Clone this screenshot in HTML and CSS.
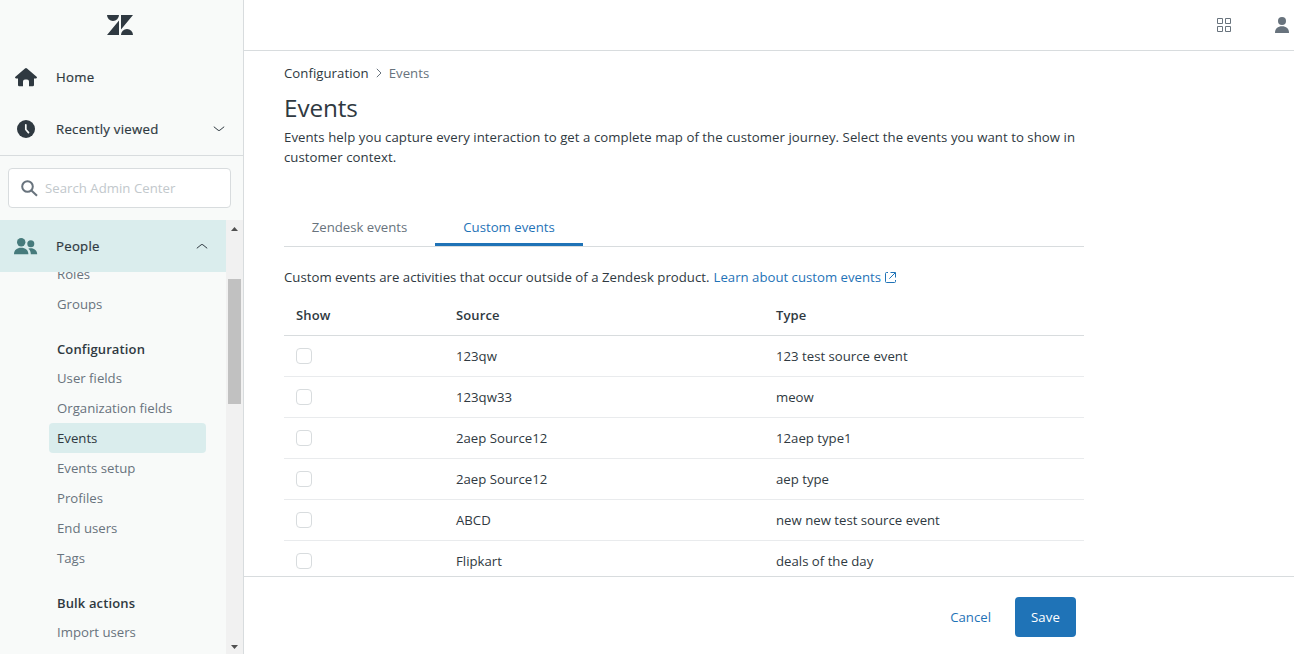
FILE: index.html
```html
<!DOCTYPE html>
<html lang="en">
<head>
<meta charset="utf-8">
<title>Events - Admin Center</title>
<link rel="stylesheet" href="styles.css">
</head>
<body>
<div class="app">
  <aside class="sidebar">
    <div class="logo">
      <svg width="26" height="20" viewBox="0 0 26 20"><path d="M0 0h12a6 6 0 0 1-12 0zM12 5.6V20H0zM14 0h12L14 14.4zM14 20a6 6 0 0 1 12 0z"/></svg>
    </div>
    <a class="nav-row">
      <svg class="icon-home" width="22" height="19" viewBox="0 0 22 19"><path d="M10 .5a1.500 1.500 0 0 1 2 0l9.600 8.300c.9.800.1 1.700-.7 1.700H19v6.500a1.300 1.300 0 0 1-1.300 1.300H14V13.500a2 2 0 0 0-2-2h-2a2 2 0 0 0-2 2v4.800H4.300A1.300 1.300 0 0 1 3 17v-6.500H1.100c-.8 0-1.600-.9-.7-1.700z"/></svg>
      <span>Home</span>
    </a>
    <a class="nav-row">
      <svg class="icon-clock" width="18" height="18" viewBox="0 0 18 18"><circle cx="9" cy="9" r="9"/><path class="hand" d="M8.800 4.800v4.700l2.700 3.100"/></svg>
      <span>Recently viewed</span>
      <svg class="chevron" width="12" height="6" viewBox="0 0 12 6"><path d="M.8.7l4.300 3.500q.9.700 1.800 0L11.200.7"/></svg>
    </a>
    <div class="search-wrap">
      <div class="search">
        <svg width="17" height="17" viewBox="0 0 17 17"><circle cx="6.500" cy="6.500" r="5.300"/><path d="M10.400 10.400l5.600 5.300"/></svg>
        <span>Search Admin Center</span>
      </div>
    </div>
    <div class="nav-scroll">
      <nav class="nav-body">
        <a class="nav-row people">
          <svg class="icon-people" width="24" height="17" viewBox="0 0 24 17"><circle cx="7.200" cy="4.300" r="4.200"/><circle cx="16.800" cy="5.700" r="3.500"/><path d="M0 16.300C0 12 3 9.800 7.200 9.800s7.200 2.200 7.200 6.500zM14.300 10.700c4.800-1.300 8.900 1.300 8.900 5.600h-6.400c0-2.400-.6-4.300-2.500-5.600z"/></svg>
          <span>People</span>
          <svg class="chevron" width="12" height="6" viewBox="0 0 12 6"><path d="M.8 5.300l4.300-3.500q.9-.7 1.800 0l4.300 3.500"/></svg>
        </a>
        <div class="subnav">
          <div class="subnav-list">
            <a>Roles</a>
            <a>Groups</a>
            <h3>Configuration</h3>
            <a>User fields</a>
            <a>Organization fields</a>
            <a class="active">Events</a>
            <a>Events setup</a>
            <a>Profiles</a>
            <a>End users</a>
            <a>Tags</a>
            <h3>Bulk actions</h3>
            <a>Import users</a>
          </div>
        </div>
      </nav>
      <div class="scrollbar">
        <svg class="arrow" width="7" height="4" viewBox="0 0 7 4"><path d="M0 4L3.500 0L7 4z"/></svg>
        <div class="thumb"></div>
        <svg class="arrow" width="7" height="4" viewBox="0 0 7 4"><path d="M0 0h7L3.500 4z"/></svg>
      </div>
    </div>
  </aside>
  <div class="page">
    <header class="topbar">
      <svg class="icon-grid" width="14" height="14" viewBox="0 0 14 14"><path d="M.5.5h5v5h-5zM8.500.5h5v5h-5zM.5 8.500h5v5h-5zM8.500 8.500h5v5h-5z"/></svg>
      <svg class="icon-user" width="14" height="16" viewBox="0 0 14 16"><circle cx="7" cy="4" r="4"/><path d="M0 16c0-4.500 2.800-6.700 7-6.700s7 2.200 7 6.700z"/></svg>
    </header>
    <main class="content">
      <div class="breadcrumb">
        <span>Configuration</span>
        <svg width="6" height="10" viewBox="0 0 6 10"><path d="M.8.8L5 5 .8 9.200"/></svg>
        <span class="current">Events</span>
      </div>
      <h1>Events</h1>
      <p class="lead">Events help you capture every interaction to get a complete map of the customer journey. Select the events you want to show in<br>customer context.</p>
      <div class="tabs">
        <div class="tab">Zendesk events</div>
        <div class="tab selected">Custom events</div>
      </div>
      <p class="hint"><span>Custom events are activities that occur outside of a Zendesk product.</span>
        <a>Learn about custom events</a>
        <svg width="11" height="11" viewBox="0 0 11 11"><path d="M3 .5H1.500a1 1 0 0 0-1 1v8a1 1 0 0 0 1 1h8a1 1 0 0 0 1-1V8M5.500.5h5v5M10.200.8L4.300 6.700"/></svg>
      </p>
      <div class="table">
        <div class="row head"><div>Show</div><div>Source</div><div>Type</div></div>
        <div class="row"><div><i class="check"></i></div><div>123qw</div><div>123 test source event</div></div>
        <div class="row"><div><i class="check"></i></div><div>123qw33</div><div>meow</div></div>
        <div class="row"><div><i class="check"></i></div><div>2aep Source12</div><div>12aep type1</div></div>
        <div class="row"><div><i class="check"></i></div><div>2aep Source12</div><div>aep type</div></div>
        <div class="row"><div><i class="check"></i></div><div>ABCD</div><div>new new test source event</div></div>
        <div class="row"><div><i class="check"></i></div><div>Flipkart</div><div>deals of the day</div></div>
      </div>
    </main>
    <footer class="actions">
      <a class="cancel">Cancel</a>
      <a class="save">Save</a>
    </footer>
  </div>
</div>
</body>
</html>
```
FILE: styles.css
```css
* { box-sizing: border-box; }
body {
  margin: 0;
  font-family: "Open Sans", "Noto Sans", sans-serif;
  font-size: 13.2px;
  line-height: 20px;
  color: #2f3941;
  background: #fff;
}
h1, h3, p { margin: 0; }
svg { display: block; flex: none; }
.app { display: flex; width: 100vw; height: 100vh; overflow: hidden; white-space: nowrap; }

.sidebar {
  display: flex;
  flex-direction: column;
  flex: none;
  width: 244px;
  border-right: 1px solid #d8dcde;
  background: #f8faf9;
}
.logo { height: 51px; padding: 15px 0 0 107px; flex: none; }
.logo svg, .icon-home, .icon-clock { fill: #2f3941; }
.nav-row { display: flex; align-items: center; height: 52px; flex: none; padding: 0 18px 0 15px; }
.nav-row span { letter-spacing: .27px; -webkit-text-stroke: .2px #2f3941; }
.nav-row .chevron { margin-left: auto; fill: none; stroke: #2f3941; stroke-width: 1; }
.icon-home { margin-right: 19px; }
.icon-clock { margin: 0 21px 0 2px; }
.hand { fill: none; stroke: #f8faf9; stroke-width: 1.700; stroke-linecap: round; }
.search-wrap { flex: none; height: 65px; padding: 12px 12px 0 8px; border-top: 1px solid #d8dcde; }
.search {
  display: flex;
  align-items: center;
  gap: 7px;
  height: 40px;
  padding-left: 12px;
  border: 1px solid #d8dcde;
  border-radius: 4px;
  background: #fff;
  color: #c2c8cc;
}
.search span { letter-spacing: .02px; }
.search svg { fill: none; stroke: #68737d; stroke-width: 2; }
.nav-scroll { display: flex; flex: 1; min-height: 0; }
.nav-body { display: flex; flex-direction: column; width: 226px; }
.people { padding-left: 14px; background: #daeded; }
.icon-people { margin-right: 18px; fill: #467b7c; }
.subnav { flex: 1; min-height: 0; overflow: hidden; }
.subnav-list { margin: -13px 20px 0 49px; }
.subnav a { display: block; height: 30px; padding: 5px 8px; color: #68737d; border-radius: 4px; }
.subnav a.active { background: #daeded; color: #2f3941; }
.subnav h3 { padding: 20px 8px 4px; font-size: 13px; font-weight: 600; line-height: 20px; letter-spacing: .13px; }
.scrollbar { display: flex; flex-direction: column; align-items: center; width: 17px; padding: 7px 0 5px; background: #f1f1f1; }
.thumb { width: 13px; height: 125px; margin: 48px 0 auto; background: #c1c1c1; }
.arrow { fill: #505050; }

.page { display: flex; flex-direction: column; flex: 1; min-width: 0; }
.topbar {
  display: flex;
  align-items: center;
  justify-content: flex-end;
  gap: 44px;
  flex: none;
  height: 51px;
  padding-right: 5px;
  border-bottom: 1px solid #d8dcde;
}
.icon-grid { fill: none; stroke: #68737d; }
.icon-user { fill: #68737d; }
.content { flex: 1; min-height: 0; overflow: hidden; padding: 12px 0 0 40px; }
.breadcrumb { display: flex; align-items: center; letter-spacing: .04px; }
.breadcrumb svg { margin: 0 7px; fill: none; stroke: #68737d; stroke-width: 1; }
.breadcrumb .current { color: #68737d; }
h1 { margin-top: 9px; font-size: 24.3px; font-weight: 400; line-height: 32px; letter-spacing: -.1px; }
.lead { margin-top: 3px; letter-spacing: .052px; }
.tabs { display: flex; width: 800px; height: 40px; margin-top: 40px; border-bottom: 1px solid #d8dcde; }
.tab { width: 151px; height: 39px; padding-top: 10px; text-align: center; color: #68737d; }
.tab.selected { width: 148px; color: #1f73b7; border-bottom: 3px solid #1f73b7; }
.hint { display: flex; align-items: center; margin-top: 20px; letter-spacing: .025px; }
.hint a { margin-left: 4px; color: #1f73b7; letter-spacing: 0; }
.hint svg { margin-left: 4px; fill: none; stroke: #1f73b7; }
.table { width: 800px; margin-top: 8px; }
.row { display: grid; grid-template-columns: 160px 320px 320px; align-items: center; height: 41px; border-bottom: 1px solid #e9ebed; }
.row > div { padding-left: 12px; }
.row.head { font-size: 13px; font-weight: 600; letter-spacing: .13px; border-color: #d8dcde; }
.check { display: block; width: 16px; height: 16px; border: 1px solid #d8dcde; border-radius: 4px; background: #fff; }
.actions {
  display: flex;
  align-items: center;
  justify-content: flex-end;
  gap: 24px;
  flex: none;
  height: 78px;
  padding: 3px 218px 0 0;
  border-top: 1px solid #d8dcde;
}
.cancel { color: #1f73b7; }
.save { width: 61px; height: 40px; line-height: 40px; border-radius: 4px; background: #1f73b7; color: #fff; text-align: center; letter-spacing: .1px; }
```
